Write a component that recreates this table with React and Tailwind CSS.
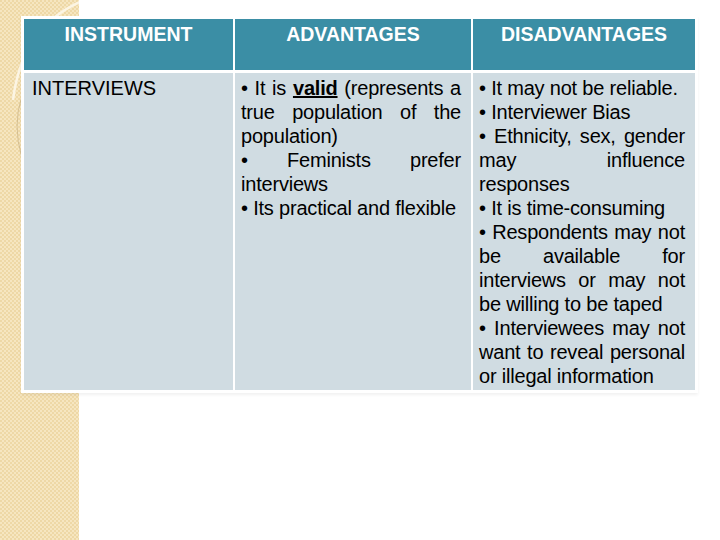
import React from 'react';

const font = { fontFamily: '"Liberation Sans", Arial, sans-serif' };

// one rendered line; justified lines stretch to the full cell width
const Line = ({ children, justify }) => (
  <div className={justify ? 'text-justify [text-align-last:justify]' : 'whitespace-nowrap'}>
    {children}
  </div>
);

const advantages = [
  { t: <>• It is <span className="font-bold underline">valid</span> (represents a</>, j: true },
  { t: 'true population of the', j: true },
  { t: 'population)' },
  { t: '• Feminists prefer', j: true },
  { t: 'interviews' },
  { t: '• Its practical and flexible' },
];

const disadvantages = [
  { t: '• It may not be reliable.' },
  { t: '• Interviewer Bias' },
  { t: '• Ethnicity, sex, gender', j: true },
  { t: 'may influence', j: true },
  { t: 'responses' },
  { t: '• It is time-consuming' },
  { t: '• Respondents may not', j: true },
  { t: 'be available for', j: true },
  { t: 'interviews or may not', j: true },
  { t: 'be willing to be taped' },
  { t: '• Interviewees may not', j: true },
  { t: 'want to reveal personal', j: true },
  { t: 'or illegal information' },
];

export default function App() {
  return (
    <div className="relative w-[720px] h-[540px] bg-white overflow-hidden" style={font}>
      {/* decorative beige strip */}
      <div className="absolute left-0 top-0 w-[79px] h-[540px] bg-[repeating-conic-gradient(#f6e6c0_0_25%,#eed8a6_0_50%)] bg-[length:4px_4px]">
        <svg width="79" height="200" className="absolute left-0 top-0">
          <path d="M 80 2 Q 22 28 13 100" fill="none" stroke="#fcf5e4" strokeWidth="2.5" />
          <path d="M 22 96 Q 12 125 22 158" fill="none" stroke="#c7b083" strokeWidth="1" opacity="0.7" />
        </svg>
      </div>

      <div className="relative pt-[16px] pl-[21px]">
        <div className="inline-grid grid-cols-[209px_236px_222px] gap-x-[2px] gap-y-[3px] bg-white border-[3px] border-white shadow-[0_2px_3px_rgba(0,0,0,0.06)] text-[20px] leading-[24px]">
          <div className="h-[51px] bg-[#3b8ea5] text-white font-bold text-center text-[19.5px] pt-[3px]">INSTRUMENT</div>
          <div className="h-[51px] bg-[#3b8ea5] text-white font-bold text-center text-[19.5px] pt-[3px]">ADVANTAGES</div>
          <div className="h-[51px] bg-[#3b8ea5] text-white font-bold text-center text-[19.5px] pt-[3px]">DISADVANTAGES</div>

          <div className="bg-[#d0dce2] text-black pt-[3px] pl-[8px]">INTERVIEWS</div>
          <div className="bg-[#d0dce2] text-black pt-[3px] pl-[6px] pr-[10px] tracking-[-0.2px]">
            {advantages.map((l, i) => (
              <Line key={i} justify={l.j}>{l.t}</Line>
            ))}
          </div>
          <div className="bg-[#d0dce2] text-black pt-[3px] pb-[2px] pl-[6px] pr-[10px] tracking-[-0.2px]">
            {disadvantages.map((l, i) => (
              <Line key={i} justify={l.j}>{l.t}</Line>
            ))}
          </div>
        </div>
      </div>
    </div>
  );
}
